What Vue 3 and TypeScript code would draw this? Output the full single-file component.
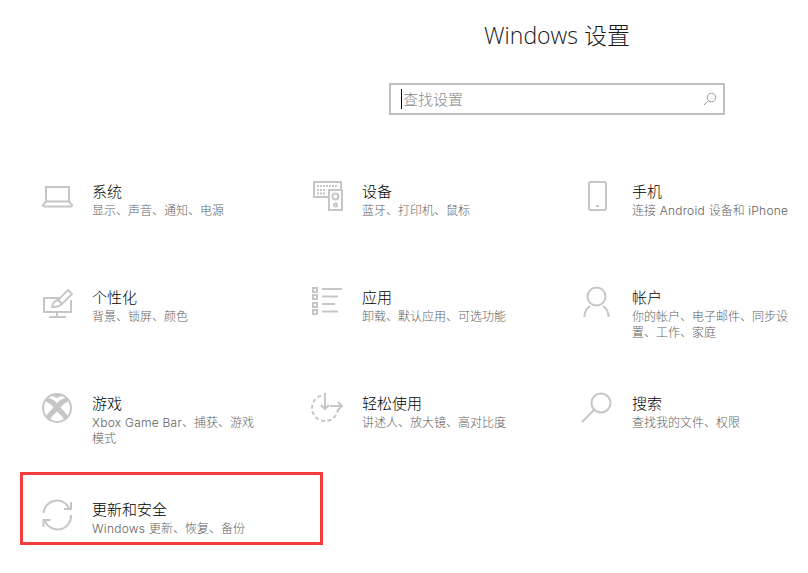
<script setup lang="ts">
interface Item {
  id: string
  title: string
  desc: string
}
const items: Item[] = [
  { id: 'system', title: '系统', desc: '显示、声音、通知、电源' },
  { id: 'devices', title: '设备', desc: '蓝牙、打印机、鼠标' },
  { id: 'phone', title: '手机', desc: '连接 Android 设备和 iPhone' },
  { id: 'personal', title: '个性化', desc: '背景、锁屏、颜色' },
  { id: 'apps', title: '应用', desc: '卸载、默认应用、可选功能' },
  { id: 'account', title: '帐户', desc: '你的帐户、电子邮件、同步设置、工作、家庭' },
  { id: 'gaming', title: '游戏', desc: 'Xbox Game Bar、捕获、游戏模式' },
  { id: 'ease', title: '轻松使用', desc: '讲述人、放大镜、高对比度' },
  { id: 'search', title: '搜索', desc: '查找我的文件、权限' },
  { id: 'update', title: '更新和安全', desc: 'Windows 更新、恢复、备份' },
]
const parts = (s: string): string[] => s.split(/([A-Za-z ]+)/).filter(Boolean)
const isLatin = (s: string): boolean => /^[A-Za-z ]+$/.test(s)
</script>

<template>
  <div class="page">
    <header class="head">
      <h1 class="title">Windows 设置</h1>
      <div class="search">
        <span class="caret"></span>
        <span class="placeholder">查找设置</span>
        <svg class="search-icon" width="14" height="14" viewBox="0 0 14 14" fill="none" stroke="#9a9a9a" stroke-width="1">
          <circle cx="8.500" cy="5.500" r="4.300" />
          <path d="M5.400 8.600 L1 13" />
        </svg>
      </div>
    </header>

    <main class="grid">
      <div v-for="item in items" :key="item.id" class="item" :class="{ selected: item.id === 'update' }">
        <svg class="icon" width="32" height="32" viewBox="0 0 32 32" fill="none" stroke="#c6c6c6" stroke-width="2">
          <template v-if="item.id === 'system'">
            <path d="M5 21 V7 H28 V21" />
            <path d="M5 21.500 H28 L31 25 Q31 26.500 29.500 26.500 H3.500 Q2 26.500 2 25 Z" />
          </template>
          <template v-else-if="item.id === 'devices'">
            <path d="M17 17 H3 V2 H30 V9" />
            <rect x="18" y="10" width="13" height="20" />
            <circle cx="24.500" cy="16.500" r="3" />
            <circle cx="24.500" cy="25" r="1.500" />
            <path d="M6 6 H27 M6 10 H15 M6 13.500 H15" stroke-dasharray="2 1" />
          </template>
          <template v-else-if="item.id === 'phone'">
            <rect x="8" y="2" width="17" height="28" rx="1.500" />
            <path d="M15 26 H18" />
          </template>
          <template v-else-if="item.id === 'personal'">
            <path d="M20 12 H3 V26 H30 V14" />
            <path d="M16 26 V30 M8 31 H25" />
            <path d="M27 4 L31 8 L21 18 L17 14 Z" fill="#fff" stroke-width="1.800" />
            <path d="M17 14 Q12 15 11 21 Q18 21 21 18 Z" fill="#fff" stroke-width="1.800" />
          </template>
          <template v-else-if="item.id === 'apps'">
            <rect x="2" y="2" width="4" height="4" />
            <rect x="2" y="9" width="4" height="4" />
            <rect x="2" y="17" width="4" height="4" />
            <rect x="2" y="24" width="4" height="4" />
            <path d="M11 3 H31 M11 10.500 H27 M11 18 H24 M11 25.500 H27" />
          </template>
          <template v-else-if="item.id === 'account'">
            <circle cx="15.500" cy="10.500" r="9" />
            <path d="M3.500 31 A12.500 13 0 0 1 9 20 M27.500 31 A12.500 13 0 0 0 22 20" />
          </template>
          <template v-else-if="item.id === 'gaming'">
            <circle cx="16" cy="16" r="14" />
            <path d="M10 3.500 Q16 1.500 22 3.500 L16 6 Z" fill="#c6c6c6" stroke="none" />
            <path d="M6 6 Q11 6 16 11 Q21 6 26 6 L28 9 Q23 11 19.500 15.500 Q25 21 27.500 25 L24 28.500 Q20 23 16 19.500 Q12 23 8 28.500 L4.500 25 Q7 21 12.500 15.500 Q9 11 4 9 Z" fill="#c6c6c6" stroke="none" />
          </template>
          <template v-else-if="item.id === 'ease'">
            <path d="M10 3.600 A13 13 0 1 0 27 17" stroke-dasharray="4 2.500" />
            <path d="M14 1 V17 M10 13 L14 17 L18 13" />
            <path d="M19 14 H31 M27 10 L31 14 L27 18" />
          </template>
          <template v-else-if="item.id === 'search'">
            <circle cx="20" cy="11" r="9.500" />
            <path d="M13 18 L1 30" />
          </template>
          <template v-else>
            <path d="M2.500 15 A13.500 13.500 0 0 1 28 10" />
            <path d="M30 17 A13.500 13.500 0 0 1 4 23" />
            <path d="M30 4 V11 H23" />
            <path d="M2.500 29 V22 H9.500" />
          </template>
        </svg>
        <div class="text">
          <div class="name">{{ item.title }}</div>
          <div class="desc"><span v-for="(p, i) in parts(item.desc)" :key="i" :class="{ latin: isLatin(p) }">{{ p }}</span></div>
        </div>
      </div>
    </main>
  </div>
</template>

<style>
html, body { margin: 0; background: #fff; overflow: hidden; }
</style>

<style scoped>
.page {
  width: 808px;
  height: 573px;
  overflow: hidden;
  font-family: "Open Sans", "Noto Sans CJK SC", sans-serif;
  background: #fff;
}
.head {
  width: 336px;
  margin-left: 389px;
  padding-top: 17px;
}
.title {
  margin: 0;
  font-size: 23px;
  line-height: 36px;
  font-weight: 300;
  text-align: center;
  color: #1a1a1a;
}
.search {
  box-sizing: border-box;
  height: 32px;
  margin-top: 30px;
  border: 2px solid #c0c0c0;
  display: flex;
  align-items: center;
  padding: 0 6px 0 10px;
}
.caret {
  width: 1px;
  height: 20px;
  background: #000;
}
.placeholder {
  flex: 1;
  font-size: 15px;
  font-weight: 300;
  color: #8a8a8a;
  margin-left: 1px;
  padding-bottom: 2px;
}
.grid {
  display: grid;
  grid-template-columns: repeat(3, 270px);
  grid-auto-rows: 106px;
  margin-left: 41px;
  margin-top: 67px;
}
.item {
  display: flex;
  align-items: flex-start;
  gap: 19px;
  position: relative;
}
.selected::after {
  content: "";
  position: absolute;
  left: -21px;
  top: -28px;
  width: 303px;
  height: 73px;
  box-sizing: border-box;
  border: 3px solid #f33c3c;
}
.icon {
  flex: none;
  margin: -2px -1px 0 0;
  overflow: visible;
}
.text {
  width: 164px;
  margin-top: -2px;
  margin-left: 1px;
}
.name {
  font-size: 15px;
  line-height: 22px;
  font-weight: 300;
  color: #000;
}
.desc {
  font-family: Inter, "Noto Sans CJK SC", sans-serif;
  font-size: 12px;
  line-height: 16px;
  font-weight: 300;
  margin-top: 1px;
  color: #5f5f5f;
}
.latin {
  letter-spacing: 0.25px;
}
</style>
